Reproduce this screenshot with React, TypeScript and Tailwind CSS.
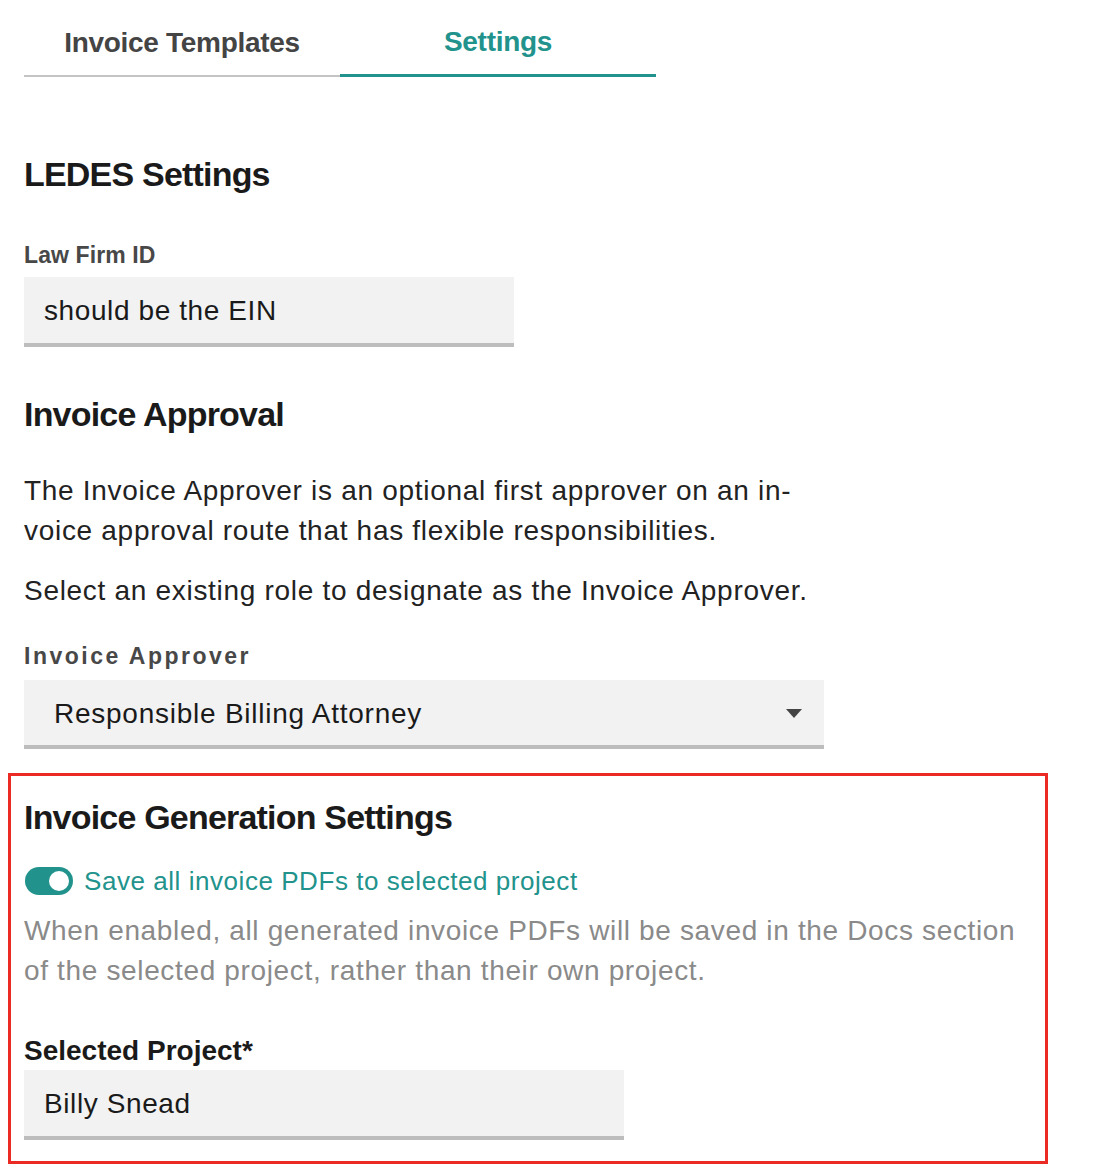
const font = { fontFamily: '"Liberation Sans", Arial, sans-serif' };

function Tab({ label, active }: { label: string; active?: boolean }) {
  return (
    <div
      className={
        active
          ? 'w-[316px] h-[77px] flex items-center justify-center pt-[9px] border-b-[3px] border-[#22938c] text-[#22938c]'
          : 'w-[316px] h-[77px] flex items-center justify-center pt-[10px] border-b-2 border-[#c4c4c4] text-[#444]'
      }
    >
      <span className="text-[28px] font-bold tracking-[-0.3px]">{label}</span>
    </div>
  );
}

function TextField({ value, width }: { value: string; width: string }) {
  return (
    <div className={`${width} h-[70px] bg-[#f2f2f2] border-b-4 border-[#bdbdbd] flex items-center pl-5`}>
      <span className="text-[28px] tracking-[0.6px] text-[#1a1a1a] pt-[2px]">{value}</span>
    </div>
  );
}

export default function App() {
  return (
    <div className="min-h-screen bg-white pl-6" style={font}>
      {/* Tabs */}
      <div className="flex items-end">
        <Tab label="Invoice Templates" />
        <Tab label="Settings" active />
      </div>

      {/* LEDES */}
      <h2 className="mt-[77px] text-[34px] leading-[40px] font-bold text-[#1a1a1a] tracking-[-0.8px]">LEDES Settings</h2>
      <div className="mt-[47px] text-[23px] leading-[28px] font-bold text-[#484848] tracking-[0.1px]">Law Firm ID</div>
      <div className="mt-[8px]">
        <TextField value="should be the EIN" width="w-[490px]" />
      </div>

      {/* Invoice Approval */}
      <h2 className="mt-[47px] text-[34px] leading-[40px] font-bold text-[#1a1a1a] tracking-[-0.8px]">Invoice Approval</h2>
      <p className="mt-[37px] text-[28px] leading-[40px] tracking-[0.7px] text-[#222]">
        The Invoice Approver is an optional first approver on an in-
        <br />
        voice approval route that has flexible responsibilities.
      </p>
      <p className="mt-[20px] text-[28px] leading-[40px] tracking-[0.7px] text-[#222]">
        Select an existing role to designate as the Invoice Approver.
      </p>
      <div className="mt-[31px] text-[23px] leading-[28px] font-bold text-[#484848] tracking-[2.5px]">Invoice Approver</div>
      <div className="mt-[10px] w-[800px] h-[69px] bg-[#f2f2f2] border-b-4 border-[#bdbdbd] flex items-center justify-between pl-[30px] pr-[22px]">
        <span className="text-[28px] tracking-[0.75px] text-[#1a1a1a] pt-[2px]">Responsible Billing Attorney</span>
        <svg width="16" height="9" viewBox="0 0 16 9" className="mt-[2px]">
          <path d="M0 0 L16 0 L8 9 Z" fill="#444" />
        </svg>
      </div>

      {/* Invoice Generation Settings */}
      <div className="mt-[24px] -ml-4 w-[1040px] border-[3px] border-[#ec2a24] pl-[13px] pt-[21px] pb-[21px]">
        <h2 className="text-[34px] leading-[40px] font-bold text-[#1a1a1a] tracking-[-0.8px]">Invoice Generation Settings</h2>
        <div className="mt-[30px] flex items-center h-[28px]">
          <div className="w-[48px] h-[28px] rounded-full bg-[#22938c] flex items-center justify-end pr-[4px] ml-[1px]">
            <div className="w-[20px] h-[20px] rounded-full bg-white" />
          </div>
          <span className="ml-[11px] text-[26px] tracking-[0.55px] text-[#22938c]">Save all invoice PDFs to selected project</span>
        </div>
        <p className="mt-[16px] text-[28px] leading-[40px] tracking-[0.65px] text-[#8a8a8a]">
          When enabled, all generated invoice PDFs will be saved in the Docs section
          <br />
          of the selected project, rather than their own project.
        </p>
        <div className="mt-[44px] text-[28px] leading-[32px] font-bold text-[#1a1a1a]">Selected Project*</div>
        <div className="mt-[3px]">
          <TextField value="Billy Snead" width="w-[600px]" />
        </div>
      </div>
    </div>
  );
}
